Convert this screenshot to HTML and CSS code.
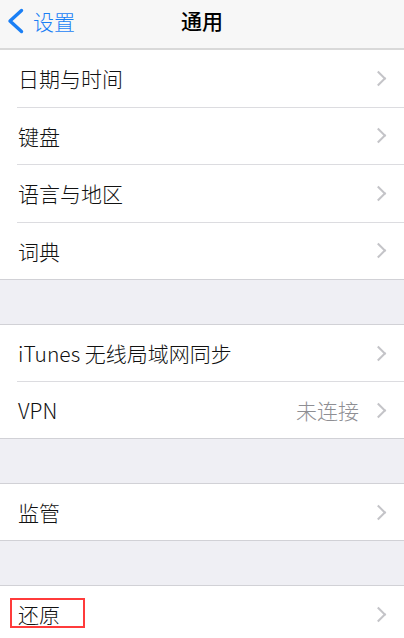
FILE: index.html
```html
<!DOCTYPE html>
<html lang="zh-CN">
<head>
    <meta charset="UTF-8">
    <meta name="viewport" content="width=device-width, initial-scale=1.0">
    <title>通用</title>
    <link rel="stylesheet" href="styles.css">
</head>
<body>
    <div class="navbar">
        <div class="back">
            <svg class="back-icon" width="20" height="26" viewBox="0 0 20 26">
                <path d="M15.5 2.5 L4 13 L15.5 23.5" fill="none" stroke="#1a7ff5" stroke-width="3.4" stroke-linecap="round" stroke-linejoin="round"/>
            </svg>
            <span>设置</span>
        </div>
        <div class="title">通用</div>
    </div>

    <div class="group first">
        <div class="row"><span class="label">日期与时间</span><span class="chevron"></span></div>
        <div class="row"><span class="label">键盘</span><span class="chevron"></span></div>
        <div class="row"><span class="label">语言与地区</span><span class="chevron"></span></div>
        <div class="row"><span class="label">词典</span><span class="chevron"></span></div>
    </div>

    <div class="gap"></div>

    <div class="group">
        <div class="row"><span class="label">iTunes 无线局域网同步</span><span class="chevron"></span></div>
        <div class="row"><span class="label">VPN</span><span class="value">未连接</span><span class="chevron"></span></div>
    </div>

    <div class="gap"></div>

    <div class="group">
        <div class="row"><span class="label">监管</span><span class="chevron"></span></div>
    </div>

    <div class="gap"></div>

    <div class="group">
        <div class="row">
            <span class="label">还原</span><span class="chevron"></span>
            <!-- annotation box -->
            <div class="mark"></div>
        </div>
    </div>
</body>
</html>
```

FILE: styles.css
```css
body, html {
    margin: 0;
    padding: 0;
    height: 100%;
    overflow: hidden;
}

body {
    font-family: "Noto Sans CJK SC", "Noto Sans", sans-serif;
    background: #efeff4;
    color: #111;
}

.navbar {
    position: relative;
    height: 48px;
    background: #f7f7f7;
    border-bottom: 2px solid #d9d9d9;
    display: flex;
    justify-content: center;
}

.back {
    position: absolute;
    left: 6px;
    top: 8px;
    display: flex;
    align-items: center;
    gap: 7px;
    color: #1a7ff5;
    font-size: 21px;
    line-height: 26px;
    font-weight: 300;
}

.back-icon {
    display: block;
}

.title {
    font-size: 21px;
    line-height: 26px;
    font-weight: 500;
    color: #000;
    padding-top: 7px;
}

.group {
    background: #fff;
    border-top: 1px solid #d1d1d6;
    border-bottom: 1px solid #d1d1d6;
}

.group.first {
    border-top: none;
}

.row {
    position: relative;
    height: 56px;
    display: flex;
    align-items: center;
    padding: 0 17px 0 18px;
    font-size: 21px;
    font-weight: 300;
}

.group.first .row {
    height: 56.5px;
}

/* inset separator between rows */
.row + .row {
    margin-top: 1px;
}

.row + .row::before {
    content: "";
    position: absolute;
    top: -1px;
    left: 17px;
    right: 0;
    height: 1px;
    background: #dcdce0;
}

.label {
    flex: 1;
}

.value {
    color: #8e8e93;
    margin-right: 14px;
}

.chevron {
    width: 9px;
    height: 9px;
    border-top: 2px solid #c4c4c8;
    border-right: 2px solid #c4c4c8;
    transform: rotate(45deg);
    margin-right: 3px;
}

.gap {
    height: 44px;
}

.mark {
    position: absolute;
    left: 10px;
    top: 12px;
    width: 71px;
    height: 26px;
    border: 2px solid #ff3b3b;
}
```
